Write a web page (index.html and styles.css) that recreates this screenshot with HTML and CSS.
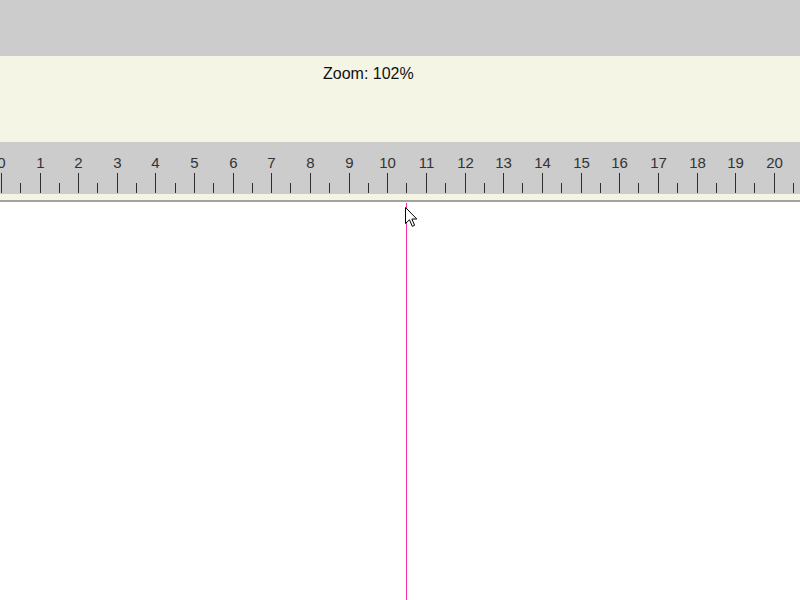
FILE: index.html
```html
<!DOCTYPE html>
<html>
<head>
<meta charset="utf-8">
<link rel="stylesheet" href="styles.css">
</head>
<body>
<div class="topbar"></div>
<div class="info"><span class="zoom">Zoom: 102%</span></div>
<div class="ruler">
  <span class="major" style="left:1px"></span><span class="label" style="left:1px">0</span>
  <span class="minor" style="left:20px"></span>
  <span class="major" style="left:40px"></span><span class="label" style="left:40px">1</span>
  <span class="minor" style="left:59px"></span>
  <span class="major" style="left:78px"></span><span class="label" style="left:78px">2</span>
  <span class="minor" style="left:97px"></span>
  <span class="major" style="left:117px"></span><span class="label" style="left:117px">3</span>
  <span class="minor" style="left:136px"></span>
  <span class="major" style="left:155px"></span><span class="label" style="left:155px">4</span>
  <span class="minor" style="left:175px"></span>
  <span class="major" style="left:194px"></span><span class="label" style="left:194px">5</span>
  <span class="minor" style="left:213px"></span>
  <span class="major" style="left:233px"></span><span class="label" style="left:233px">6</span>
  <span class="minor" style="left:252px"></span>
  <span class="major" style="left:271px"></span><span class="label" style="left:271px">7</span>
  <span class="minor" style="left:290px"></span>
  <span class="major" style="left:310px"></span><span class="label" style="left:310px">8</span>
  <span class="minor" style="left:329px"></span>
  <span class="major" style="left:349px"></span><span class="label" style="left:349px">9</span>
  <span class="minor" style="left:368px"></span>
  <span class="major" style="left:387px"></span><span class="label" style="left:387px">10</span>
  <span class="minor" style="left:406px"></span>
  <span class="major" style="left:426px"></span><span class="label" style="left:426px">11</span>
  <span class="minor" style="left:445px"></span>
  <span class="major" style="left:465px"></span><span class="label" style="left:465px">12</span>
  <span class="minor" style="left:484px"></span>
  <span class="major" style="left:503px"></span><span class="label" style="left:503px">13</span>
  <span class="minor" style="left:522px"></span>
  <span class="major" style="left:542px"></span><span class="label" style="left:542px">14</span>
  <span class="minor" style="left:561px"></span>
  <span class="major" style="left:581px"></span><span class="label" style="left:581px">15</span>
  <span class="minor" style="left:600px"></span>
  <span class="major" style="left:619px"></span><span class="label" style="left:619px">16</span>
  <span class="minor" style="left:638px"></span>
  <span class="major" style="left:658px"></span><span class="label" style="left:658px">17</span>
  <span class="minor" style="left:677px"></span>
  <span class="major" style="left:697px"></span><span class="label" style="left:697px">18</span>
  <span class="minor" style="left:716px"></span>
  <span class="major" style="left:735px"></span><span class="label" style="left:735px">19</span>
  <span class="minor" style="left:754px"></span>
  <span class="major" style="left:774px"></span><span class="label" style="left:774px">20</span>
  <span class="minor" style="left:793px"></span>
</div>
<div class="ruler-foot"></div>
<div class="canvas">
  <div class="guide"></div>
  <svg class="cursor" width="13" height="21" viewBox="0 0 13 21">
    <path d="M0.5 0.5 L0.5 16.5 L4.5 12.8 L7.3 19.3 L9.6 18.3 L6.9 12 L11.8 12 Z" fill="#fff" stroke="#000" stroke-width="1" stroke-linejoin="miter"/>
  </svg>
</div>
</body>
</html>
```

FILE: styles.css
```css
html, body {
  margin: 0;
  padding: 0;
  background: #ffffff;
  font-family: "Liberation Sans", Arial, sans-serif;
  overflow: hidden;
}

.topbar {
  height: 56px;
  background: #cccccc;
}

.info {
  height: 86px;
  box-sizing: border-box;
  padding: 9px 0 0 323px;
  background: #f5f5e6;
}

.zoom {
  font-size: 16px;
  line-height: 18px;
  color: #111;
}

.ruler {
  position: relative;
  height: 52px;
  background: #cccccc;
  overflow: hidden;
}

.major,
.minor {
  position: absolute;
  width: 1px;
  background: #2e2e2e;
  bottom: 1px;
}

.major {
  height: 20px;
}

.minor {
  height: 10px;
}

.label {
  position: absolute;
  top: 12px;
  transform: translateX(-50%);
  margin-left: 0.5px;
  font-size: 15px;
  line-height: 17px;
  color: #333;
  white-space: nowrap;
}

.ruler-foot {
  height: 6px;
  background: #f5f5e6;
  border-bottom: 2px solid #a3a39b;
  box-shadow: 0 1px 0 #d6d6d0;
}

.canvas {
  position: relative;
  height: 400px;
  background: #fff;
}

.guide {
  position: absolute;
  left: 406px;
  top: 1px;
  bottom: 0;
  width: 1px;
  background: #ff2aa8;
}

.cursor {
  position: absolute;
  left: 405px;
  top: 5px;
}
```
